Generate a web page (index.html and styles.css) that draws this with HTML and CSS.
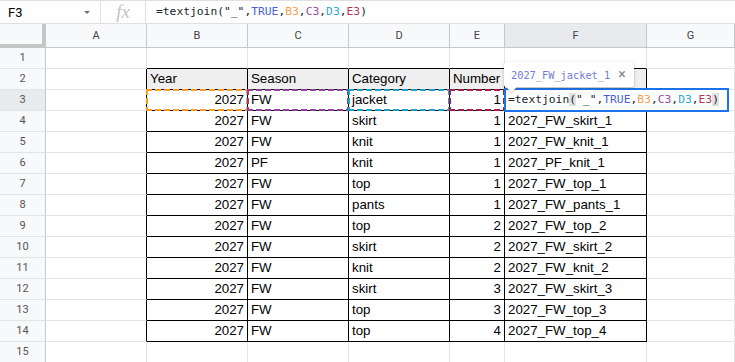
FILE: index.html
```html
<!DOCTYPE html>
<html lang="en">
<head>
  <meta charset="UTF-8">
  <meta name="viewport" content="width=device-width, initial-scale=1.0">
  <title>textjoin</title>
  <link rel="stylesheet" href="styles.css">
</head>
<body>

<div class="formula-bar">
  <div class="name-box">
    <span>F3</span>
    <span class="arrow"></span>
  </div>
  <div class="fx">fx</div>
  <div class="formula">=textjoin("_",<span class="f-true">TRUE</span>,<span class="f-b">B3</span>,<span class="f-c">C3</span>,<span class="f-d">D3</span>,<span class="f-e">E3</span>)</div>
</div>

<div class="sheet" id="sheet">
  <div class="row head">
    <div class="c corner"></div>
    <div class="c">A</div>
    <div class="c">B</div>
    <div class="c">C</div>
    <div class="c">D</div>
    <div class="c">E</div>
    <div class="c sel">F</div>
    <div class="c">G</div>
  </div>
</div>

<script>
  const data = [
    ["FW", "jacket", 1],
    ["FW", "skirt", 1],
    ["FW", "knit", 1],
    ["PF", "knit", 1],
    ["FW", "top", 1],
    ["FW", "pants", 1],
    ["FW", "top", 2],
    ["FW", "skirt", 2],
    ["FW", "knit", 2],
    ["FW", "skirt", 3],
    ["FW", "top", 3],
    ["FW", "top", 4]
  ];

  const sheet = document.getElementById("sheet");
  let html = "";

  // row 1: empty, bottom edge of the table
  html += `
    <div class="row">
      <div class="c rh">1</div>
      <div class="c"></div>
      <div class="c bb"></div><div class="c bb"></div><div class="c bb"></div><div class="c bb"></div><div class="c bb"></div>
      <div class="c"></div>
    </div>`;

  // row 2: table header, F2 holds the preview tooltip
  html += `
    <div class="row">
      <div class="c rh">2</div>
      <div class="c br"></div>
      <div class="c tb th">Year</div>
      <div class="c tb th">Season</div>
      <div class="c tb th">Category</div>
      <div class="c tb th">Number</div>
      <div class="c tb th">
        <div class="preview">2027_FW_jacket_1<span class="close">×</span></div>
      </div>
      <div class="c"></div>
    </div>`;

  data.forEach((item, i) => {
    const r = i + 3;
    const id = `2027_${item[0]}_${item[1]}_${item[2]}`;
    const first = r === 3;
    html += `
      <div class="row">
        <div class="c rh${first ? " sel" : ""}">${r}</div>
        <div class="c br"></div>
        <div class="c tb num">2027${first ? '<span class="ref ref-b"></span>' : ""}</div>
        <div class="c tb">${item[0]}${first ? '<span class="ref ref-c"></span>' : ""}</div>
        <div class="c tb">${item[1]}${first ? '<span class="ref ref-d"></span>' : ""}</div>
        <div class="c tb num">${item[2]}${first ? '<span class="ref ref-e"></span>' : ""}</div>
        <div class="c tb">${first ? '<div class="editor">=textjoin<span class="paren">(</span>"_",<span class="f-true">TRUE</span>,<span class="f-b">B3</span>,<span class="f-c">C3</span>,<span class="f-d">D3</span>,<span class="f-e">E3</span><span class="paren">)</span></div>' : id}</div>
        <div class="c"></div>
      </div>`;
  });

  html += `
    <div class="row">
      <div class="c rh">15</div>
      <div class="c"></div><div class="c"></div><div class="c"></div><div class="c"></div><div class="c"></div><div class="c"></div><div class="c"></div>
    </div>`;

  sheet.innerHTML += html;
</script>
</body>
</html>
```

FILE: styles.css
```css
body {
  margin: 0;
  font-family: 'Liberation Sans', Arial, sans-serif;
  background: #fff;
  overflow: hidden;
}

/* formula bar */
.formula-bar {
  display: flex;
  height: 22px;
  border-top: 1px solid #e0e0e0;
  border-bottom: 1px solid #e0e0e0;
}

.name-box {
  width: 101px;
  box-sizing: border-box;
  padding: 0 8px;
  display: flex;
  align-items: center;
  justify-content: space-between;
  font-family: Roboto, sans-serif;
  font-size: 13px;
  color: #000;
  border-right: 1px solid #e0e0e0;
}

.arrow {
  width: 0;
  height: 0;
  border-left: 3px solid transparent;
  border-right: 3px solid transparent;
  border-top: 3px solid #757575;
  margin-right: 2px;
}

.fx {
  width: 45px;
  box-sizing: border-box;
  border-right: 1px solid #e0e0e0;
  font-family: 'Liberation Serif', serif;
  font-style: italic;
  font-size: 19px;
  color: #c4c4c4;
  text-align: center;
  line-height: 22px;
}

.formula {
  padding-left: 10px;
  font-family: 'DejaVu Sans Mono', monospace;
  font-size: 11.3px;
  line-height: 22px;
  color: #202124;
}

.f-true { color: #4a5fd4; }
.f-b { color: #f5a04f; }
.f-c { color: #9550a8; }
.f-d { color: #33a7d0; }
.f-e { color: #ad3b5e; }

/* grid */
.row {
  display: grid;
  grid-template-columns: 46px 101px 101px 101px 101px 55px 142px 1fr;
  height: 21px;
}

.c {
  position: relative;
  box-sizing: border-box;
  border-right: 1px solid #e2e3e3;
  border-bottom: 1px solid #e2e3e3;
  padding: 0 3px;
  font-size: 13.3px;
  line-height: 20px;
  color: #000;
  white-space: nowrap;
}

.head {
  height: 24px;
}

.head .c {
  background: #f8f9fa;
  border-right-color: #c7c7c7;
  border-bottom-color: #c7c7c7;
  font-family: Roboto, sans-serif;
  font-size: 11px;
  line-height: 23px;
  color: #444;
  text-align: center;
}

.head .corner {
  border-right: 4px solid #c4c7c5;
  border-bottom: 4px solid #c4c7c5;
}

.rh {
  background: #f8f9fa;
  border-right-color: #c7c7c7;
  font-family: Roboto, sans-serif;
  font-size: 11px;
  color: #555;
  text-align: center;
}

.sel,
.head .sel {
  background: #e8eaed;
}

/* table borders */
.bb { border-bottom-color: #000; }
.br { border-right-color: #000; }
.tb {
  border-right-color: #000;
  border-bottom-color: #000;
}

.th { background: #efefef; }
.num { text-align: right; }

/* range highlights, drawn as dashes */
.ref {
  position: absolute;
  top: -1px;
  left: -1px;
  right: -1px;
  bottom: -1px;
  background:
    repeating-linear-gradient(90deg, currentColor 0 6px, transparent 6px 9px) top / 100% 2px no-repeat,
    repeating-linear-gradient(90deg, currentColor 0 6px, transparent 6px 9px) bottom / 100% 2px no-repeat,
    repeating-linear-gradient(180deg, currentColor 0 6px, transparent 6px 9px) left / 2px 100% no-repeat,
    repeating-linear-gradient(180deg, currentColor 0 6px, transparent 6px 9px) right / 2px 100% no-repeat;
}

.ref-b { color: #ff9c1a; }
.ref-c { color: #8e3fa0; }
.ref-d { color: #12a5c9; }
.ref-e { color: #a61c4f; }

/* in-cell editor */
.editor {
  position: absolute;
  z-index: 2;
  top: -2px;
  left: -1px;
  width: 225px;
  height: 24px;
  box-sizing: border-box;
  border: 2px solid #1a73e8;
  background: #fff;
  padding-left: 2px;
  font-family: 'DejaVu Sans Mono', monospace;
  font-size: 11.3px;
  line-height: 20px;
  color: #202124;
}

.paren { background: #e3e3e3; }

/* value preview */
.preview {
  position: absolute;
  z-index: 3;
  top: -7px;
  left: -1px;
  width: 130px;
  height: 25px;
  box-sizing: border-box;
  padding-left: 7px;
  background: #fff;
  border-radius: 2px;
  box-shadow: 0 1px 3px rgba(60, 64, 67, 0.35);
  font-family: 'DejaVu Sans Mono', monospace;
  font-size: 10.3px;
  line-height: 25px;
  color: #6f7bdb;
}

.preview::after {
  content: "";
  position: absolute;
  left: 4px;
  bottom: -4px;
  width: 7px;
  height: 7px;
  background: #fff;
  transform: rotate(45deg);
  box-shadow: 1px 1px 1px rgba(60, 64, 67, 0.2);
}

.close {
  margin-left: 8px;
  font-family: Roboto, sans-serif;
  font-size: 14px;
  color: #80868b;
}
```
